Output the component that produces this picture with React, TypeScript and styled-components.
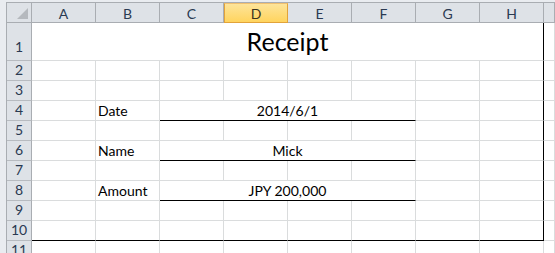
import React from "react";
import styled, { createGlobalStyle, css } from "styled-components";

const GlobalStyle = createGlobalStyle`
  html, body { margin: 0; padding: 0; background: #ffffff; overflow: hidden; }
  body { font-family: "Lato", "Liberation Sans", sans-serif; }
`;

const GRID = "#dadcdd";
const HDR_BG = "#dee2e7";
const HDR_LINE = "#a9adb2";
const INK = "#000000";

const Frame = styled.div`
  width: 555px;
  height: 253px;
  box-sizing: border-box;
  background: #e9ecf0;
  padding: 2px 0 0 6px;
  overflow: hidden;
`;

const Sheet = styled.div`
  display: grid;
  grid-template-columns: 25px repeat(8, 64px) 1fr;
  grid-template-rows: 20px 38px repeat(10, 20px);
  border-top: 1px solid ${HDR_LINE};
  border-left: 1px solid ${HDR_LINE};
  background: #ffffff;
  height: 100%;
  box-sizing: border-box;
`;

const Corner = styled.div`
  position: relative;
  background: ${HDR_BG};
  border-right: 1px solid ${HDR_LINE};
  border-bottom: 1px solid ${HDR_LINE};
  &::after {
    content: "";
    position: absolute;
    right: 3px;
    bottom: 3px;
    width: 0;
    height: 0;
    border-left: 11px solid transparent;
    border-bottom: 11px solid #b5b9be;
  }
`;

const ColHeader = styled.div<{ $active?: boolean }>`
  box-sizing: border-box;
  display: flex;
  align-items: center;
  justify-content: center;
  font-size: 14px;
  color: #2a3a52;
  background: ${HDR_BG};
  border-right: 1px solid ${HDR_LINE};
  border-bottom: 1px solid ${HDR_LINE};
  padding-top: 1px;
  ${(p) =>
    p.$active &&
    css`
      background: linear-gradient(#fde49a, #ffd45e);
      border: 1px solid #e2a33a;
      border-top-color: #f0c070;
      color: #3b3320;
    `}
`;

const RowHeader = styled.div<{ $pad: number }>`
  box-sizing: border-box;
  display: flex;
  align-items: flex-end;
  justify-content: center;
  font-size: 14px;
  line-height: 14px;
  color: #2a3a52;
  background: ${HDR_BG};
  border-right: 1px solid ${HDR_LINE};
  border-bottom: 1px solid #b7bbc0;
  padding-bottom: ${(p) => p.$pad}px;
`;

const Cell = styled.div<{
  $span?: number;
  $under?: boolean;
  $edge?: boolean;
  $align?: "left" | "center";
  $big?: boolean;
}>`
  box-sizing: border-box;
  display: flex;
  align-items: flex-end;
  justify-content: ${(p) => (p.$align === "center" ? "center" : "flex-start")};
  grid-column: span ${(p) => p.$span ?? 1};
  border-right: 1px solid ${(p) => (p.$edge ? INK : GRID)};
  border-bottom: 1px solid ${(p) => (p.$under ? INK : GRID)};
  padding: 0 2px ${(p) => (p.$big ? 6 : 2)}px 2px;
  font-size: ${(p) => (p.$big ? 25 : 14)}px;
  line-height: ${(p) => (p.$big ? 25 : 14)}px;
  color: #000000;
  white-space: nowrap;
`;

const COLS = ["A", "B", "C", "D", "E", "F", "G", "H", ""];

const fields: Record<number, [string, string]> = {
  4: ["Date", "2014/6/1"],
  6: ["Name", "Mick"],
  8: ["Amount", "JPY 200,000"],
};

export default function App() {
  const rows = [2, 3, 4, 5, 6, 7, 8, 9, 10];
  return (
    <>
      <GlobalStyle />
      <Frame>
        <Sheet>
          <Corner />
          {COLS.map((c, i) => (
            <ColHeader key={i} $active={c === "D"}>
              {c}
            </ColHeader>
          ))}

          <RowHeader $pad={6}>1</RowHeader>
          <Cell $span={8} $edge $align="center" $big>
            Receipt
          </Cell>
          <Cell />

          {rows.map((r) => {
            const last = r === 10;
            const f = fields[r];
            return (
              <React.Fragment key={r}>
                <RowHeader $pad={3}>{r}</RowHeader>
                <Cell $under={last} />
                <Cell $under={last}>{f ? f[0] : ""}</Cell>
                {f ? (
                  <Cell $span={4} $under $align="center">
                    {f[1]}
                  </Cell>
                ) : (
                  <>
                    <Cell $under={last} />
                    <Cell $under={last} />
                    <Cell $under={last} />
                    <Cell $under={last} />
                  </>
                )}
                <Cell $under={last} />
                <Cell $under={last} $edge />
                <Cell />
              </React.Fragment>
            );
          })}

          <RowHeader $pad={3}>11</RowHeader>
          {COLS.slice(0, 8).map((_, i) => (
            <Cell key={i} />
          ))}
          <Cell />
        </Sheet>
      </Frame>
    </>
  );
}
